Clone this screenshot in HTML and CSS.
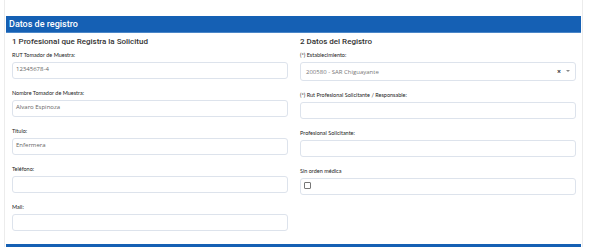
FILE: index.html
```html
<!DOCTYPE html>
<html lang="es">
<head>
<meta charset="utf-8">
<title>Datos de registro</title>
<link rel="stylesheet" href="styles.css">
</head>
<body>
<div class="card">
  <div class="card-header">Datos de registro</div>
  <div class="card-body">
    <div class="col">
      <h3 class="section-title">1 Profesional que Registra la Solicitud</h3>
      <div class="group">
        <label class="lbl">RUT Tomador de Muestra:</label>
        <div class="field">12345678-4</div>
      </div>
      <div class="group">
        <label class="lbl">Nombre Tomador de Muestra:</label>
        <div class="field">Alvaro Espinoza</div>
      </div>
      <div class="group">
        <label class="lbl">Título:</label>
        <div class="field">Enfermera</div>
      </div>
      <div class="group">
        <label class="lbl">Teléfono:</label>
        <div class="field"></div>
      </div>
      <div class="group">
        <label class="lbl">Mail:</label>
        <div class="field"></div>
      </div>
    </div>
    <div class="col">
      <h3 class="section-title">2 Datos del Registro</h3>
      <div class="group">
        <label class="lbl">(*) Establecimiento:</label>
        <div class="field select">
          <span class="sel-text">200580 - SAR Chiguayante</span>
          <span class="sel-clear">×</span>
          <span class="sel-arrow"></span>
        </div>
      </div>
      <div class="group">
        <label class="lbl">(*) Rut Profesional Solicitante / Responsable:</label>
        <div class="field"></div>
      </div>
      <div class="group">
        <label class="lbl">Profesional Solicitante:</label>
        <div class="field"></div>
      </div>
      <div class="group">
        <label class="lbl">Sin orden médica</label>
        <div class="field check-field"><span class="checkbox"></span></div>
      </div>
    </div>
  </div>
  <div class="next-bar"></div>
</div>
</body>
</html>
```

FILE: styles.css
```css
html, body {
  margin: 0;
  padding: 0;
  background: #ffffff;
}

body {
  font-family: Lato, "Liberation Sans", sans-serif;
  color: #333;
}

.card {
  margin: 0 4px 0 4px;
  padding: 16px 1px 0 1px;
  width: 579px;
  border-left: 1px solid #ececec;
  border-right: 1px solid #ececec;
  box-sizing: border-box;
  height: 247px;
  display: flex;
  flex-direction: column;
}

.card-header {
  background: #1560b4;
  color: #ffffff;
  font-family: Roboto, "Liberation Sans", sans-serif;
  font-weight: 500;
  font-size: 9px;
  height: 16px;
  line-height: 16px;
  padding-left: 3px;
  border-bottom: 1px solid #4a86c8;
}

.card-body {
  display: grid;
  grid-template-columns: 276px 276px;
  column-gap: 12px;
  padding: 4px 0 0 6px;
  flex: 1;
}

.section-title {
  margin: 0 0 4px 0;
  font-family: Roboto, "Liberation Sans", sans-serif;
  font-weight: 500;
  font-size: 8px;
  line-height: 10px;
  color: #333;
}

.group {
  margin-bottom: 10px;
}

.lbl {
  display: block;
  font-size: 5.5px;
  line-height: 9px;
  margin-bottom: 2px;
  color: #222;
}

.field {
  height: 17px;
  box-sizing: border-box;
  border: 1px solid #dde3ec;
  border-radius: 3px;
  font-family: "Open Sans", "Liberation Sans", sans-serif;
  font-size: 6px;
  line-height: 10px;
  color: #666;
  padding: 1px 3px 0 3px;
}

.select {
  height: 19px;
  display: flex;
  align-items: center;
  padding: 0 4px 0 5px;
}

.sel-text {
  flex: 1;
  color: #777;
}

.sel-clear {
  font-size: 7px;
  font-weight: bold;
  color: #333;
  margin-right: 5px;
}

.sel-arrow {
  width: 0;
  height: 0;
  border-left: 2px solid transparent;
  border-right: 2px solid transparent;
  border-top: 2.5px solid #888;
  margin-right: 1px;
  margin-bottom: 2px;
}

.check-field {
  padding: 3px 0 0 3px;
}

.checkbox {
  display: block;
  width: 5px;
  height: 5px;
  border: 1px solid #777;
  border-radius: 1px;
}

.next-bar {
  height: 3px;
  background: #1560b4;
  margin-top: auto;
}
```
